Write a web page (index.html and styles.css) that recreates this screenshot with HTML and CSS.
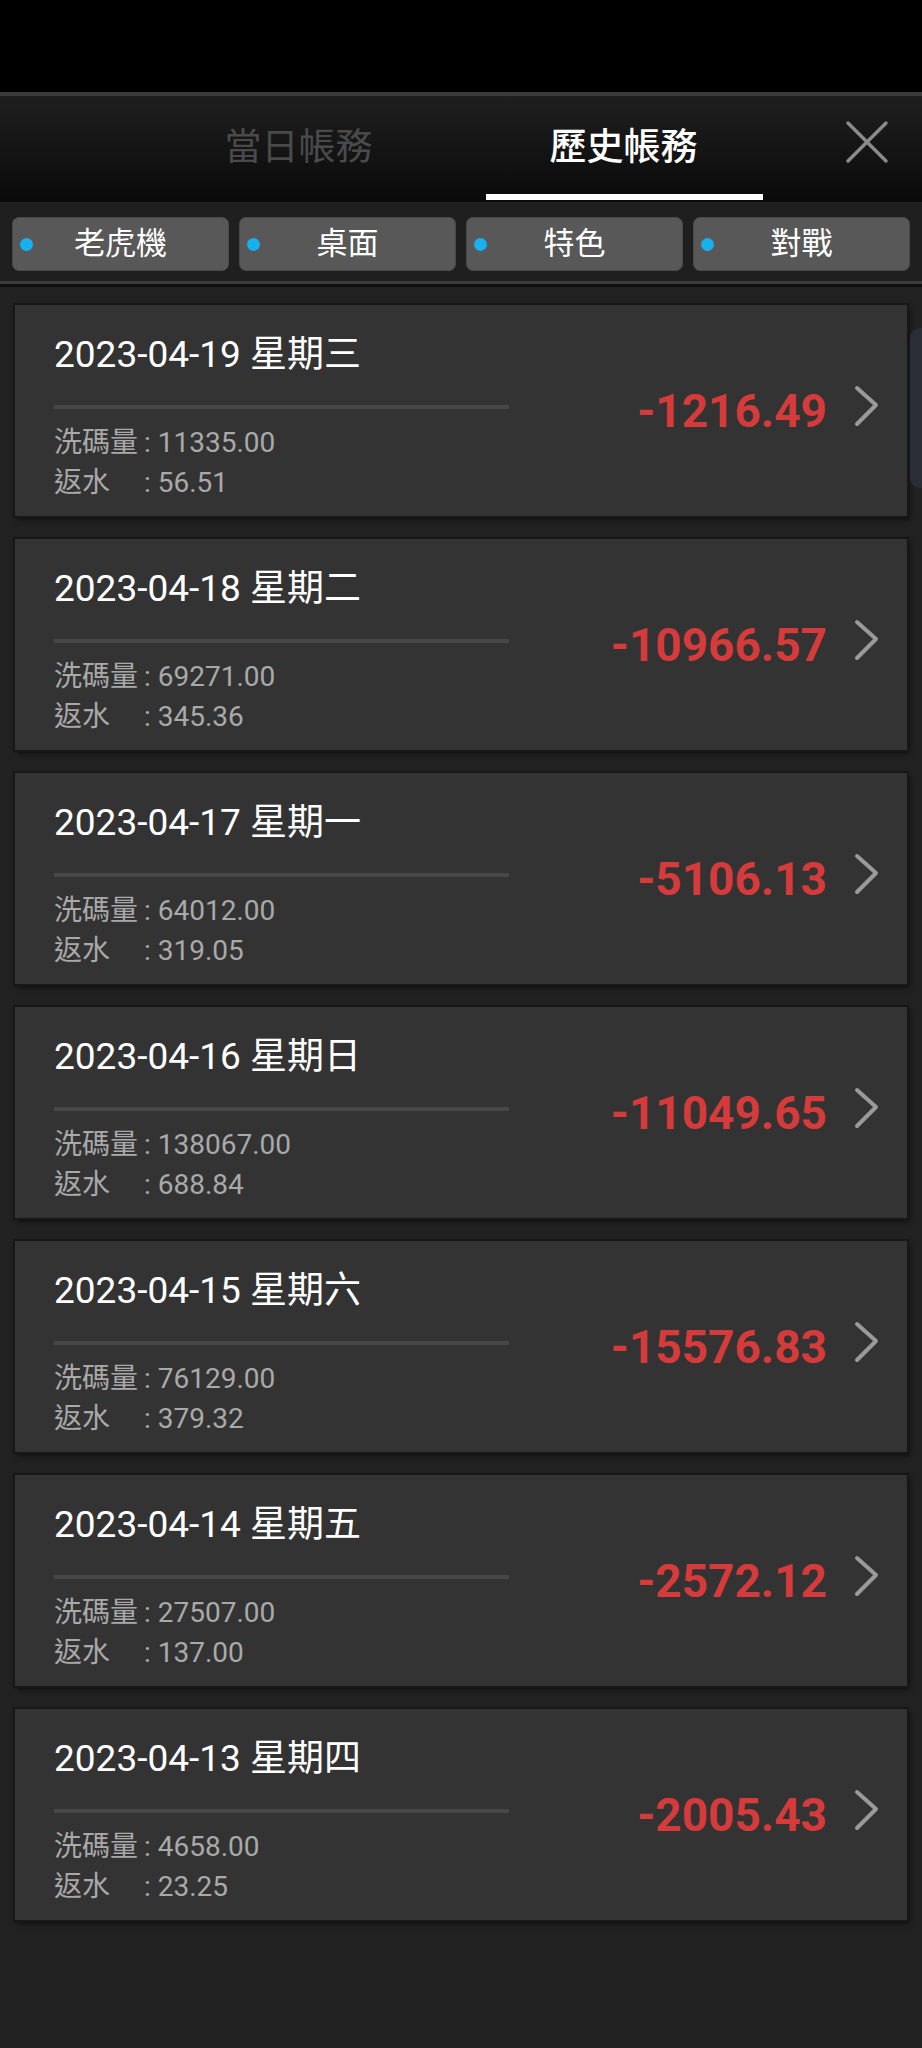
FILE: index.html
```html
<!DOCTYPE html>
<html lang="zh-Hant">
<head>
  <meta charset="UTF-8">
  <title>歷史帳務</title>
  <link rel="stylesheet" href="styles.css">
</head>
<body>

<div class="statusbar"></div>

<div class="header">
  <div class="tabs">
    <div class="tab">當日帳務</div>
    <div class="tab active">歷史帳務</div>
  </div>
  <button class="close" aria-label="關閉">
    <svg width="44" height="44" viewBox="0 0 44 44"><path d="M3 3 L41 41 M41 3 L3 41" stroke="#8a8a8a" stroke-width="3.5" stroke-linecap="round" fill="none"/></svg>
  </button>
</div>

<div class="filters">
  <button class="filter"><span class="dot"></span>老虎機</button>
  <button class="filter"><span class="dot"></span>桌面</button>
  <button class="filter"><span class="dot"></span>特色</button>
  <button class="filter"><span class="dot"></span>對戰</button>
</div>

<div id="list" class="list"></div>

<div class="handle"></div>

<script>
  const days = [
    { date: "2023-04-19 星期三", turnover: "11335.00", rebate: "56.51", total: "-1216.49" },
    { date: "2023-04-18 星期二", turnover: "69271.00", rebate: "345.36", total: "-10966.57" },
    { date: "2023-04-17 星期一", turnover: "64012.00", rebate: "319.05", total: "-5106.13" },
    { date: "2023-04-16 星期日", turnover: "138067.00", rebate: "688.84", total: "-11049.65" },
    { date: "2023-04-15 星期六", turnover: "76129.00", rebate: "379.32", total: "-15576.83" },
    { date: "2023-04-14 星期五", turnover: "27507.00", rebate: "137.00", total: "-2572.12" },
    { date: "2023-04-13 星期四", turnover: "4658.00", rebate: "23.25", total: "-2005.43" }
  ];

  const list = document.getElementById("list");

  days.forEach(d => {
    const card = document.createElement("div");
    card.className = "card";
    card.innerHTML = `
      <div class="info">
        <div class="date">${d.date}</div>
        <div class="rule"></div>
        <div class="line"><span class="label">洗碼量</span>: ${d.turnover}</div>
        <div class="line"><span class="label">返水</span>: ${d.rebate}</div>
      </div>
      <div class="amount">${d.total}</div>
      <svg class="chev" width="30" height="42" viewBox="0 0 30 42"><path d="M6 3 L25 20 L6 39" stroke="#9a9a9a" stroke-width="4" stroke-linecap="round" stroke-linejoin="round" fill="none"/></svg>
    `;
    list.appendChild(card);
  });
</script>

</body>
</html>
```

FILE: styles.css
```css
body {
  margin: 0;
  background-color: #212121;
  font-family: Roboto, "Noto Sans CJK TC", sans-serif;
  color: white;
  min-height: 2048px;
  position: relative;
}

.statusbar {
  height: 92px;
  background: #000;
}

.header {
  position: relative;
  height: 106px;
  border-top: 4px solid #3a3a3a;
  background: linear-gradient(#1f1f1f, #0a0a0a);
}
.tabs {
  display: flex;
  justify-content: center;
  height: 100%;
}
.tab {
  width: 325px;
  text-align: center;
  font-size: 37px;
  line-height: 100px;
  color: #4a4a4a;
  box-sizing: border-box;
  padding-top: 2px;
}
.tab.active {
  color: #fff;
  font-weight: 500;
  position: relative;
}
.tab.active::after {
  content: "";
  position: absolute;
  left: 25px;
  right: 23px;
  bottom: 2px;
  height: 6px;
  background: #fff;
}
.close {
  position: absolute;
  right: 33px;
  top: 24px;
  background: none;
  border: none;
  padding: 0;
}
.close svg { display: block; }

.filters {
  display: flex;
  gap: 10px;
  padding: 15px 12px 10px 12px;
  background: #1f1f1f;
  border-bottom: 3px solid #3c3c3c;
  box-shadow: 0 3px 0 #0e0e0e;
}
.filter {
  flex: 1;
  position: relative;
  height: 54px;
  background: #585858;
  border: 1px solid #4a4a4a;
  border-radius: 7px;
  color: #fff;
  font-family: Roboto, "Noto Sans CJK TC", sans-serif;
  font-size: 31px;
  line-height: 50px;
  padding: 0;
}
.filter .dot {
  position: absolute;
  left: 7px;
  top: 20px;
  width: 13px;
  height: 13px;
  border-radius: 50%;
  background: #17b1ee;
}

.list {
  display: flex;
  flex-direction: column;
  gap: 23px;
  padding: 21px 15px 0 15px;
}
.card {
  display: flex;
  align-items: center;
  height: 211px;
  background: #333333;
  box-shadow: 0 0 0 2px #171717, 2px 3px 5px rgba(0, 0, 0, 0.7);
  padding: 0 26px 0 39px;
  box-sizing: border-box;
}
.info {
  flex: 1;
  align-self: stretch;
  padding-top: 28px;
}
.date {
  font-size: 37px;
  line-height: 44px;
  color: #fff;
}
.rule {
  width: 455px;
  height: 4px;
  margin: 28px 0 14px 0;
  background: #474747;
}
.line {
  font-size: 28px;
  line-height: 40px;
  color: #a9a9a9;
}
.label {
  display: inline-block;
  width: 90px;
}
.amount {
  font-size: 46px;
  font-weight: 700;
  color: #d63b3b;
  margin-right: 24px;
}
.chev {
  margin-bottom: 10px;
}

.handle {
  position: absolute;
  left: 910px;
  top: 328px;
  width: 30px;
  height: 160px;
  border-radius: 10px;
  background: #2a2e36;
}
```
